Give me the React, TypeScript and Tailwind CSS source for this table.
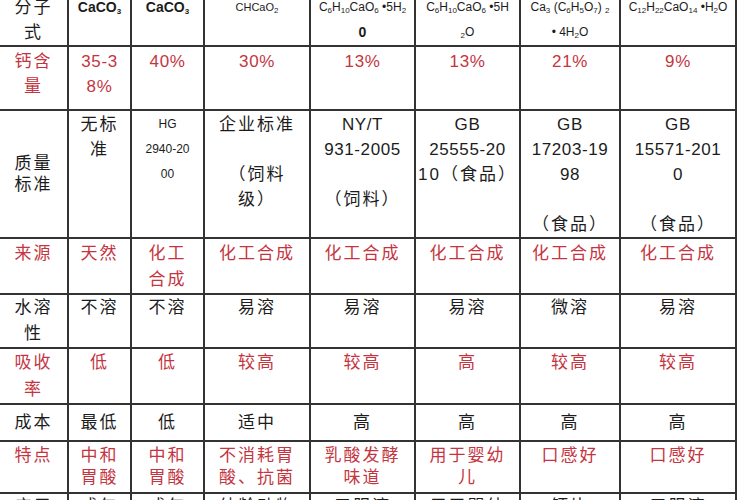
import React from "react";

const RED = "text-[#c4353f]";
const BLACK = "text-[#1c1c1c]";

type Row = {
  h: number;
  lh: string;
  pt: string;
  red: boolean;
  firstMiddle?: boolean;
  firstLh?: string;
  cells: string[][];
  smallCol?: number;
};

const rows: Row[] = [
  {
    h: 64,
    lh: "leading-[25px]",
    pt: "pt-[2px]",
    red: true,
    cells: [["钙含", "量"], ["35-3", "8%"], ["40%"], ["30%"], ["13%"], ["13%"], ["21%"], ["9%"]],
  },
  {
    h: 128,
    lh: "leading-[25px]",
    pt: "pt-[1px]",
    red: false,
    firstMiddle: true,
    firstLh: "leading-[21px]",
    smallCol: 2,
    cells: [
      ["质量", "标准"],
      ["无标", "准"],
      ["HG", "2940-20", "00"],
      ["企业标准", "\u00a0", "（饲料", "级）"],
      ["NY/T", "931-2005", "\u00a0", "（饲料）"],
      ["GB", "25555-20", "10（食品）"],
      ["GB", "17203-19", "98", "\u00a0", "（食品）"],
      ["GB", "15571-201", "0", "\u00a0", "（食品）"],
    ],
  },
  {
    h: 53,
    lh: "leading-[26px]",
    pt: "pt-[2px]",
    red: true,
    cells: [["来源"], ["天然"], ["化工", "合成"], ["化工合成"], ["化工合成"], ["化工合成"], ["化工合成"], ["化工合成"]],
  },
  {
    h: 51,
    lh: "leading-[26px]",
    pt: "pt-[0px]",
    red: false,
    cells: [["水溶", "性"], ["不溶"], ["不溶"], ["易溶"], ["易溶"], ["易溶"], ["微溶"], ["易溶"]],
  },
  {
    h: 52,
    lh: "leading-[27px]",
    pt: "pt-[0px]",
    red: true,
    cells: [["吸收", "率"], ["低"], ["低"], ["较高"], ["较高"], ["高"], ["较高"], ["较高"]],
  },
  {
    h: 37,
    lh: "leading-[25px]",
    pt: "pt-[5px]",
    red: false,
    cells: [["成本"], ["最低"], ["低"], ["适中"], ["高"], ["高"], ["高"], ["高"]],
  },
  {
    h: 52,
    lh: "leading-[22px]",
    pt: "pt-[3px]",
    red: true,
    cells: [
      ["特点"],
      ["中和", "胃酸"],
      ["中和", "胃酸"],
      ["不消耗胃", "酸、抗菌"],
      ["乳酸发酵", "味道"],
      ["用于婴幼", "儿"],
      ["口感好"],
      ["口感好"],
    ],
  },
  {
    h: 40,
    lh: "leading-[25px]",
    pt: "pt-[0px]",
    red: false,
    cells: [["应用"], ["成年"], ["成年"], ["幼龄动物"], ["口服液"], ["用于婴幼"], ["钙片"], ["口服液"]],
  },
];

const widths = ["w-[68px]", "w-[63px]", "w-[73px]", "w-[106px]", "w-[105px]", "w-[105px]", "w-[100px]", "w-[116px]"];

function Line({ s, small }: { s: string; small?: boolean }) {
  const latin = /^[\x00-\x7F]+$/.test(s);
  if (small) {
    return <div className="text-[12px] tracking-[0px]">{s}</div>;
  }
  return <div className={latin ? "tracking-[0.6px]" : "tracking-[2px]"}>{s}</div>;
}

const S = ({ children }: { children: React.ReactNode }) => (
  <sub className="text-[8px] bottom-[-0.2em]">{children}</sub>
);

const tdBase = "border-2 border-[#333333] p-0 text-center";

export default function App() {
  return (
    <div
      className="w-[750px] h-[500px] overflow-hidden bg-white"
      style={{ fontFamily: '"Liberation Sans", "Noto Sans CJK SC", sans-serif' }}
    >
      <table className="table-fixed border-collapse w-[736px]">
        <colgroup>
          {widths.map((w, i) => (
            <col key={i} className={w} />
          ))}
        </colgroup>
        <tbody>
          <tr className="h-[45px]">
            <td className={`${tdBase} align-top border-t-0 border-l-0 text-[17px] ${BLACK}`}>
              <div className="-mt-[5px] leading-[25px] tracking-[2px]">
                <div>分子</div>
                <div>式</div>
              </div>
            </td>
            <td className={`${tdBase} align-top border-t-0 ${BLACK}`}>
              <div className="-mt-[5px] leading-[25px] text-[14px] font-bold">
                CaCO<S>3</S>
              </div>
            </td>
            <td className={`${tdBase} align-top border-t-0 ${BLACK}`}>
              <div className="-mt-[5px] leading-[25px] text-[14px] font-bold">
                CaCO<S>3</S>
              </div>
            </td>
            <td className={`${tdBase} align-top border-t-0 ${BLACK}`}>
              <div className="-mt-[5px] leading-[25px] text-[11px]">
                CHCaO<S>2</S>
              </div>
            </td>
            <td className={`${tdBase} align-top border-t-0 ${BLACK}`}>
              <div className="-mt-[5px] leading-[25px] text-[12px] whitespace-nowrap">
                <div>
                  C<S>6</S>H<S>10</S>CaO<S>6</S> •5H<S>2</S>
                </div>
                <div className="text-[14px] font-bold">0</div>
              </div>
            </td>
            <td className={`${tdBase} align-top border-t-0 ${BLACK}`}>
              <div className="-mt-[5px] leading-[25px] text-[12px] whitespace-nowrap">
                <div>
                  C<S>6</S>H<S>10</S>CaO<S>6</S> •5H
                </div>
                <div>
                  <S>2</S>O
                </div>
              </div>
            </td>
            <td className={`${tdBase} align-top border-t-0 ${BLACK}`}>
              <div className="-mt-[5px] leading-[25px] text-[12px] whitespace-nowrap">
                <div>
                  Ca<S>3</S> (C<S>6</S>H<S>5</S>O<S>7</S>) <S>2</S>
                </div>
                <div>
                  • 4H<S>2</S>O
                </div>
              </div>
            </td>
            <td className={`${tdBase} align-top border-t-0 ${BLACK}`}>
              <div className="-mt-[5px] leading-[25px] text-[12px] whitespace-nowrap">
                C<S>12</S>H<S>22</S>CaO<S>14</S> •H<S>2</S>O
              </div>
            </td>
          </tr>
          {rows.map((r, ri) => (
            <tr key={ri} style={{ height: r.h }}>
              {r.cells.map((c, ci) => {
                const middle = ci === 0 && r.firstMiddle;
                return (
                  <td
                    key={ci}
                    className={`${tdBase} ${ci === 0 ? "border-l-0" : ""} ${
                      middle ? "align-middle" : "align-top"
                    } text-[17px] whitespace-nowrap ${r.red ? RED : BLACK}`}
                  >
                    <div className={`${middle ? r.firstLh ?? r.lh : r.lh} ${middle ? "" : r.pt}`}>
                      {c.map((s, si) => (
                        <Line key={si} s={s} small={r.smallCol === ci} />
                      ))}
                    </div>
                  </td>
                );
              })}
            </tr>
          ))}
        </tbody>
      </table>
    </div>
  );
}
